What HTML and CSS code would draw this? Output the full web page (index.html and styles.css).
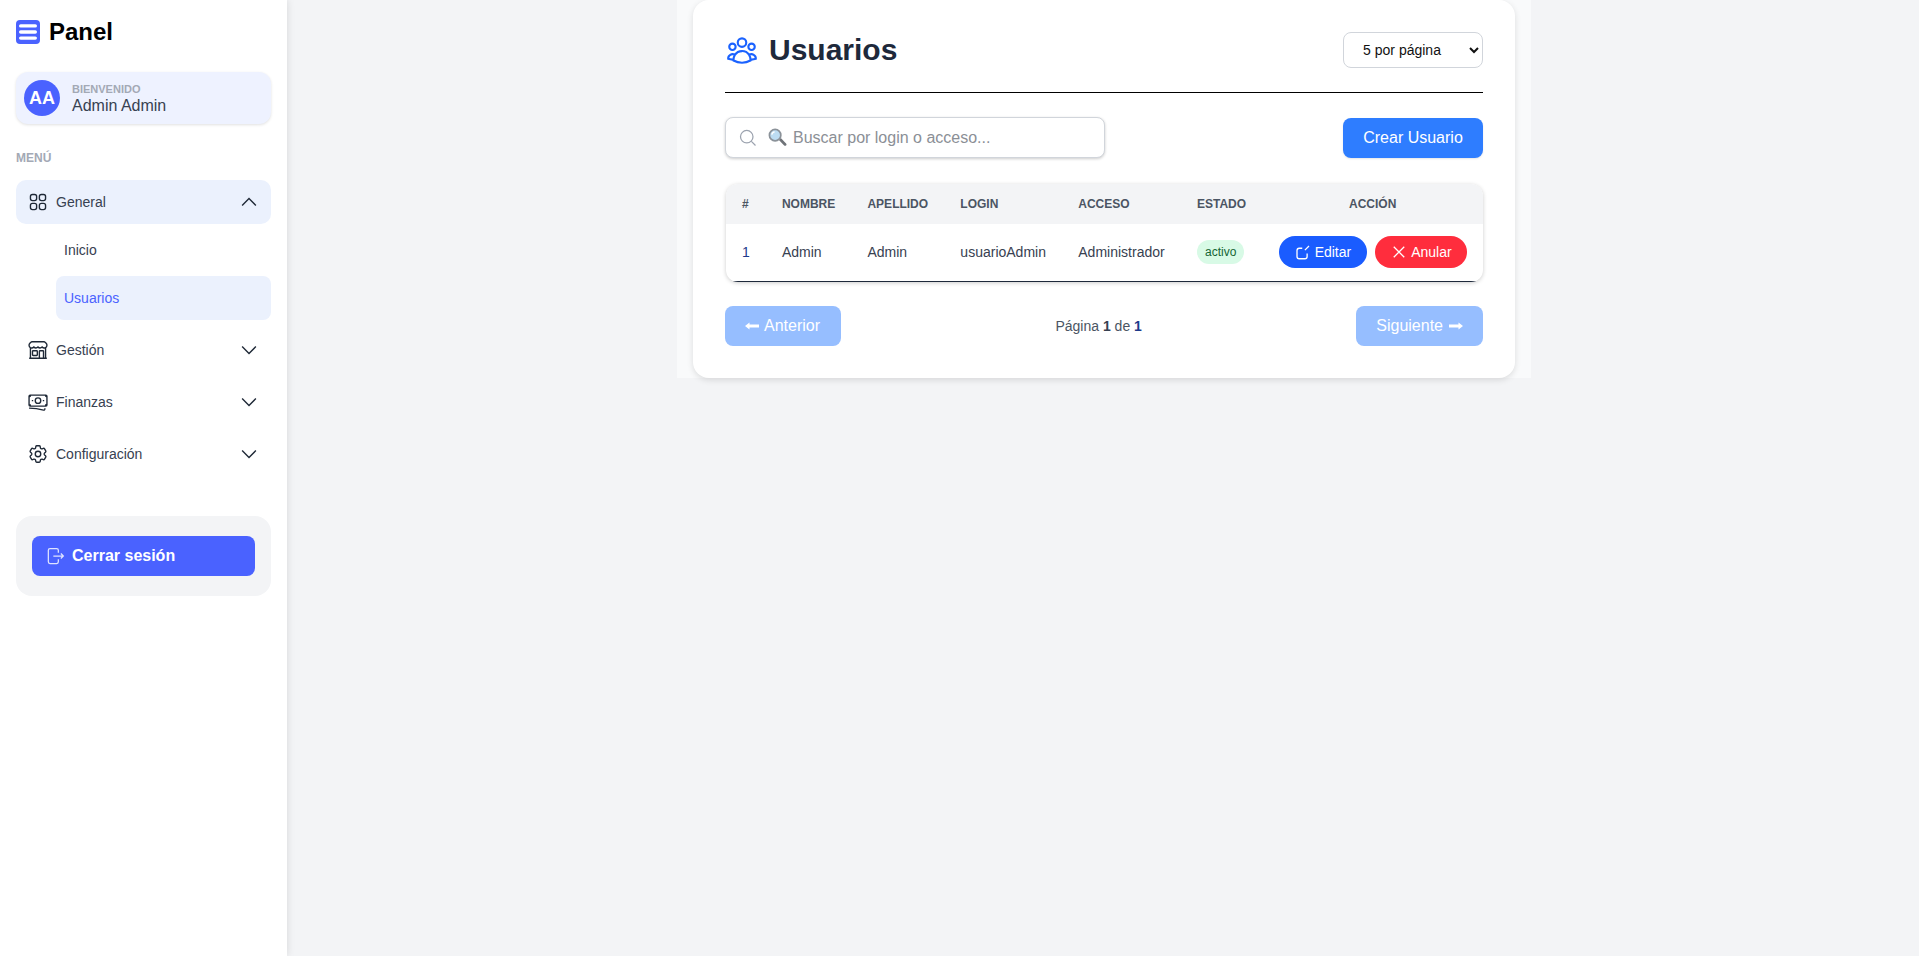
FILE: index.html
```html
<!doctype html>
<html lang="es">
<head>
<meta charset="utf-8">
<title>Panel - Usuarios</title>
<link rel="stylesheet" href="styles.css">
</head>
<body>

<div class="layout">

<aside class="sidebar">
  <div class="brand">
    <svg class="brand-icon" viewBox="0 0 24 24"><rect width="24" height="24" rx="4" fill="#4a62ff"/><rect x="3" y="4.200" width="18" height="3.400" rx="1.700" fill="#fff"/><rect x="3" y="10.300" width="18" height="3.400" rx="1.700" fill="#fff"/><rect x="3" y="16.400" width="18" height="3.400" rx="1.700" fill="#fff"/></svg>
    <span>Panel</span>
  </div>

  <div class="welcome">
    <div class="avatar">AA</div>
    <div class="welcome-text">
      <small>BIENVENIDO</small>
      <span>Admin Admin</span>
    </div>
  </div>

  <div class="menu-label">MENÚ</div>

  <nav class="menu">
    <div class="menu-item open">
      <svg class="ico" viewBox="0 0 24 24"><path d="M3.75 6A2.25 2.25 0 0 1 6 3.75h2.25A2.25 2.25 0 0 1 10.5 6v2.25a2.25 2.25 0 0 1-2.25 2.25H6a2.25 2.25 0 0 1-2.25-2.25V6ZM3.75 15.75A2.25 2.25 0 0 1 6 13.5h2.25a2.25 2.25 0 0 1 2.25 2.25V18a2.25 2.25 0 0 1-2.25 2.25H6A2.25 2.25 0 0 1 3.75 18v-2.25ZM13.5 6a2.25 2.25 0 0 1 2.25-2.25H18A2.25 2.25 0 0 1 20.25 6v2.25A2.25 2.25 0 0 1 18 10.5h-2.25a2.25 2.25 0 0 1-2.25-2.25V6ZM13.5 15.75a2.25 2.25 0 0 1 2.25-2.25H18a2.25 2.25 0 0 1 2.25 2.25V18A2.25 2.25 0 0 1 18 20.25h-2.25A2.25 2.25 0 0 1 13.5 18v-2.25Z"/></svg>
      <span class="menu-name">General</span>
      <svg class="ico" viewBox="0 0 24 24"><path d="m4.5 15.75 7.5-7.5 7.5 7.5"/></svg>
    </div>
    <div class="submenu">
      <div class="sub-item">Inicio</div>
      <div class="sub-item active">Usuarios</div>
    </div>
    <div class="menu-item">
      <svg class="ico" viewBox="0 0 24 24"><path d="M13.5 21v-7.5a.75.75 0 0 1 .75-.75h3a.75.75 0 0 1 .75.75V21m-4.5 0H2.36m11.14 0H18m0 0h3.64m-1.39 0V9.349M3.75 21V9.349m0 0a3.001 3.001 0 0 0 3.75-.615A2.993 2.993 0 0 0 9.75 9.75c.896 0 1.7-.393 2.25-1.016a2.993 2.993 0 0 0 2.25 1.016c.896 0 1.7-.393 2.25-1.016a3.001 3.001 0 0 0 3.75.614m-16.5 0a3.004 3.004 0 0 1-.621-4.72l1.189-1.19A1.5 1.5 0 0 1 5.378 3h13.243a1.5 1.5 0 0 1 1.06.44l1.19 1.189a3 3 0 0 1-.621 4.72M6.75 18h3.75a.75.75 0 0 0 .75-.75V13.5a.75.75 0 0 0-.75-.75H6.75a.75.75 0 0 0-.75.75v3.75c0 .414.336.75.75.75Z"/></svg>
      <span class="menu-name">Gestión</span>
      <svg class="ico" viewBox="0 0 24 24"><path d="m19.5 8.25-7.5 7.5-7.5-7.5"/></svg>
    </div>
    <div class="menu-item">
      <svg class="ico" viewBox="0 0 24 24"><path d="M2.25 18.75a60.07 60.07 0 0 1 15.797 2.101c.727.198 1.453-.342 1.453-1.096V18.75M3.75 4.5v.75A.75.75 0 0 1 3 6h-.75m0 0v-.375c0-.621.504-1.125 1.125-1.125H20.25M2.25 6v9m18-10.5v.75c0 .414.336.75.75.75h.75m-1.5-1.5h.375c.621 0 1.125.504 1.125 1.125v9.75c0 .621-.504 1.125-1.125 1.125h-.375m1.5-1.5H21a.75.75 0 0 0-.75.75v.75m0 0H3.75m0 0h-.375a1.125 1.125 0 0 1-1.125-1.125V15m1.5 1.5v-.75A.75.75 0 0 0 3 15h-.75M15 10.5a3 3 0 1 1-6 0 3 3 0 0 1 6 0Zm3 0h.008v.008H18V10.5Zm-12 0h.008v.008H6V10.5Z"/></svg>
      <span class="menu-name">Finanzas</span>
      <svg class="ico" viewBox="0 0 24 24"><path d="m19.5 8.25-7.5 7.5-7.5-7.5"/></svg>
    </div>
    <div class="menu-item">
      <svg class="ico" viewBox="0 0 24 24"><path d="M9.594 3.94c.09-.542.56-.94 1.11-.94h2.593c.55 0 1.02.398 1.11.94l.213 1.281c.063.374.313.686.645.87.074.04.147.083.22.127.325.196.72.257 1.075.124l1.217-.456a1.125 1.125 0 0 1 1.37.49l1.296 2.247a1.125 1.125 0 0 1-.26 1.431l-1.003.827c-.293.241-.438.613-.43.992a7.723 7.723 0 0 1 0 .255c-.008.378.137.75.43.991l1.004.827c.424.35.534.955.26 1.43l-1.298 2.247a1.125 1.125 0 0 1-1.369.491l-1.217-.456c-.355-.133-.75-.072-1.076.124a6.47 6.47 0 0 1-.22.128c-.331.183-.581.495-.644.869l-.213 1.281c-.09.543-.56.94-1.11.94h-2.594c-.55 0-1.019-.398-1.11-.94l-.213-1.281c-.062-.374-.312-.686-.644-.87a6.52 6.52 0 0 1-.22-.127c-.325-.196-.72-.257-1.076-.124l-1.217.456a1.125 1.125 0 0 1-1.369-.49l-1.297-2.247a1.125 1.125 0 0 1 .26-1.431l1.004-.827c.292-.24.437-.613.43-.991a6.932 6.932 0 0 1 0-.255c.007-.38-.138-.751-.43-.992l-1.004-.827a1.125 1.125 0 0 1-.26-1.43l1.297-2.247a1.125 1.125 0 0 1 1.37-.491l1.216.456c.356.133.751.072 1.076-.124.072-.044.146-.086.22-.128.332-.183.582-.495.644-.869l.214-1.28ZM15 12a3 3 0 1 1-6 0 3 3 0 0 1 6 0Z"/></svg>
      <span class="menu-name">Configuración</span>
      <svg class="ico" viewBox="0 0 24 24"><path d="m19.5 8.25-7.5 7.5-7.5-7.5"/></svg>
    </div>
  </nav>

  <div class="logout-box">
    <button class="logout">
      <svg class="logout-ico" viewBox="0 0 24 24"><path d="M16 8V5a2 2 0 0 0-2-2H6a2 2 0 0 0-2 2v14a2 2 0 0 0 2 2h8a2 2 0 0 0 2-2v-3M10 12h12m-3-3 3 3-3 3"/></svg>
      Cerrar sesión
    </button>
  </div>
</aside>

<main class="main">
  <div class="wrap">
    <section class="card">

      <div class="card-head">
        <h1>
          <svg class="title-ico" viewBox="0 0 24 24"><path d="M18 18.72a9.094 9.094 0 0 0 3.741-.479 3 3 0 0 0-4.682-2.72m.94 3.198.001.031c0 .225-.012.447-.037.666A11.944 11.944 0 0 1 12 21c-2.17 0-4.207-.576-5.963-1.584A6.062 6.062 0 0 1 6 18.719m12 0a5.971 5.971 0 0 0-.941-3.197m0 0A5.995 5.995 0 0 0 12 12.75a5.995 5.995 0 0 0-5.058 2.772m0 0a3 3 0 0 0-4.681 2.72 8.986 8.986 0 0 0 3.74.477m.94-3.197a5.971 5.971 0 0 0-.94 3.197M15 6.75a3 3 0 1 1-6 0 3 3 0 0 1 6 0Zm6 3a2.25 2.25 0 1 1-4.5 0 2.25 2.25 0 0 1 4.5 0Zm-13.5 0a2.25 2.25 0 1 1-4.5 0 2.25 2.25 0 0 1 4.5 0Z"/></svg>
          Usuarios
        </h1>
        <select class="per-page">
          <option>5 por página</option>
          <option>10 por página</option>
          <option>20 por página</option>
        </select>
      </div>

      <div class="toolbar">
        <div class="search">
          <svg class="search-ico" viewBox="0 0 24 24"><path d="m21 21-5.197-5.197m0 0A7.5 7.500 0 1 0 5.196 5.196a7.500 7.500 0 0 0 10.607 10.607Z"/></svg>
          <svg class="search-emoji" viewBox="0 0 20 20"><path d="M11.500 12.500l2-2 5.500 5.800a1.400 1.400 0 0 1-2 2z" fill="#6f7378"/><circle cx="7.500" cy="7.500" r="6" fill="#bcdcf2" stroke="#8b9299" stroke-width="1.800"/><path d="M4 7a3.500 3.500 0 0 1 3-3" fill="none" stroke="#fff" stroke-width="1.400"/></svg>
          <input type="text" placeholder="Buscar por login o acceso...">
        </div>
        <button class="btn-create">Crear Usuario</button>
      </div>

      <div class="table-box">
        <table>
          <thead>
            <tr>
              <th>#</th>
              <th>Nombre</th>
              <th>Apellido</th>
              <th>Login</th>
              <th>Acceso</th>
              <th>Estado</th>
              <th class="center">Acción</th>
            </tr>
          </thead>
          <tbody>
            <tr>
              <td class="num">1</td>
              <td>Admin</td>
              <td>Admin</td>
              <td>usuarioAdmin</td>
              <td>Administrador</td>
              <td><span class="badge">activo</span></td>
              <td class="center">
                <div class="actions">
                  <button class="pill edit">
                    <svg class="pill-ico" viewBox="0 0 24 24"><path d="M11 7H7a3 3 0 0 0-3 3v8a3 3 0 0 0 3 3h7.500a3 3 0 0 0 3-3v-4M14.500 9.500 20 4"/></svg>
                    Editar
                  </button>
                  <button class="pill cancel">
                    <svg class="pill-ico" viewBox="0 0 24 24"><path d="M5 19 19 5M5 5l14 14"/></svg>
                    Anular
                  </button>
                </div>
              </td>
            </tr>
          </tbody>
        </table>
      </div>

      <div class="pager">
        <button class="page-btn prev">
          <svg class="arrow" viewBox="0 0 14 8"><path d="M0 4l4.500-3.500v2h9.500v3H4.500v2z"/></svg>
          Anterior
        </button>
        <span class="page-info">Página <b>1</b> de <b class="last">1</b></span>
        <button class="page-btn next">
          Siguiente
          <svg class="arrow" viewBox="0 0 14 8"><path d="M14 4L9.500.5v2H0v3h9.500v2z"/></svg>
        </button>
      </div>

    </section>
  </div>
</main>

</div>

</body>
</html>
```

FILE: styles.css
```css
* {box-sizing: border-box;}
html, body {height: 100%;}
body {margin: 0; background: #f3f4f6; color: #1f2937; font: 14px "Liberation Sans", Arial, sans-serif;}
button, input, select {font-family: inherit;}
.layout {display: flex; min-height: 100%;}

/* sidebar */
.sidebar {width: 287px; flex: none; padding: 20px 16px; background: #fff; box-shadow: 0 0 8px rgba(0,0,0,.12);}
.brand {display: flex; align-items: center; gap: 9px; height: 24px; margin-bottom: 28px; color: #000; font-size: 24px; font-weight: bold;}
.brand-icon {width: 24px; height: 24px;}
.welcome {display: flex; align-items: center; gap: 12px; height: 52px; padding: 0 8px; border-radius: 12px; background: #eef2ff; box-shadow: 0 1px 3px rgba(0,0,0,.12);}
.avatar {width: 36px; height: 36px; border-radius: 50%; display: flex; align-items: center; justify-content: center; background: #4a62ff; color: #fff; font-size: 18px; font-weight: bold;}
.welcome-text {display: flex; flex-direction: column; font-size: 16px; line-height: 17px; color: #374151;}
.welcome-text small {font-size: 11px; font-weight: bold; line-height: 15px; color: #a3a9b5;}
.menu-label {margin: 27px 0 15px; font-size: 12px; font-weight: bold; line-height: 14px; color: #a3a9b5;}
.menu {display: flex; flex-direction: column; gap: 8px;}
.menu-item {display: flex; align-items: center; gap: 7px; height: 44px; padding: 0 11px; border-radius: 10px; color: #374151;}
.menu-item.open {background: #ebf1fd;}
.menu-name {flex: 1;}
.ico {width: 22px; height: 22px; fill: none; stroke: #1f2937; stroke-width: 1.5;}
.submenu {display: flex; flex-direction: column; gap: 4px; margin: -4px 0 0 40px;}
.sub-item {display: flex; align-items: center; height: 44px; padding: 0 8px; border-radius: 8px; color: #374151;}
.sub-item.active {background: #ebf1fd; color: #4a62ff;}
.logout-box {margin-top: 40px; padding: 20px 16px; border-radius: 16px; background: #f3f4f6;}
.logout {display: flex; align-items: center; gap: 7px; width: 100%; height: 40px; padding: 0 13px; border: 0; border-radius: 8px; background: #4a62ff; color: #fff; font-size: 16px; font-weight: bold;}
.logout-ico {width: 20px; height: 20px; fill: none; stroke: #dfe4ff; stroke-width: 1.5;}

/* main */
.main {flex: 1; display: flex; justify-content: center; align-items: flex-start; padding-left: 2px;}
.wrap {width: 854px; padding: 0 16px; background: #f9fafb;}
.card {height: 378px; padding: 32px; border-radius: 16px; background: #fff; box-shadow: 0 2px 6px rgba(0,0,0,.12);}
.card-head {display: flex; justify-content: space-between; align-items: center; height: 61px; padding-bottom: 25px; border-bottom: 1px solid #000;}
h1 {display: flex; align-items: center; gap: 10px; margin: 0; color: #1e293b; font-size: 30px;}
.title-ico {width: 34px; height: 34px; fill: none; stroke: #1a62ff; stroke-width: 1.5;}
.per-page {width: 140px; height: 36px; padding: 0 18px 0 8px; border: 1px solid #d1d5db; border-radius: 8px; background: #fff; color: #111; font-size: 14px; text-align: center;}

.toolbar {display: flex; justify-content: space-between; align-items: flex-end; height: 41px; margin: 24px 0 26px;}
.search {display: flex; align-items: center; width: 380px; height: 41px; padding-left: 12px; border: 1px solid #d1d5db; border-radius: 8px; background: #fff; box-shadow: 0 1px 3px rgba(0,0,0,.2);}
.search-ico {width: 20px; height: 20px; fill: none; stroke: #9ca3af; stroke-width: 1.5;}
.search-emoji {width: 19px; height: 19px; margin-left: 10px;}
.search input {flex: 1; min-width: 0; margin-left: 4px; border: 0; outline: 0; background: none; font-size: 16px;}
.search input::placeholder {color: #8b8f96;}
.btn-create {width: 140px; height: 40px; border: 0; border-radius: 8px; background: #2e7dff; color: #fff; font-size: 16px; box-shadow: 0 1px 2px rgba(0,0,0,.1);}

/* table */
.table-box {margin-left: 1px; border-radius: 12px; overflow: hidden; background: #fff; box-shadow: 0 1px 4px rgba(0,0,0,.2);}
table {width: 100%; border-collapse: collapse;}
th {height: 40px; padding: 0 16px; background: #f3f4f6; color: #4b5563; font-size: 12px; text-align: left; text-transform: uppercase;}
td {height: 57px; padding: 0 16px; border-bottom: 1px solid #1e293b; color: #374151; white-space: nowrap;}
td.num {color: #1e3a8a;}
.center {text-align: center;}
.badge {display: inline-block; height: 24px; padding: 0 8px; border-radius: 12px; background: #d8fae6; color: #166534; font-size: 12px; line-height: 24px;}
.actions {display: flex; justify-content: center; gap: 8px;}
.pill {display: flex; align-items: center; gap: 3px; height: 32px; padding: 0 16px 0 15px; border: 0; border-radius: 16px; color: #fff; font-size: 14px;}
.pill.edit {background: #1a5cff;}
.pill.cancel {background: #ff2d3d; padding-right: 15px;}
.pill-ico {width: 18px; height: 18px; fill: none; stroke: #fff; stroke-width: 1.75;}

/* pager */
.pager {display: flex; justify-content: space-between; align-items: center; height: 40px; margin-top: 24px;}
.page-btn {display: flex; align-items: center; gap: 5px; height: 40px; padding: 0 20px; border: 0; border-radius: 8px; background: #96beff; color: #fff; font-size: 16px;}
.page-btn.prev {padding-right: 21px;}
.page-btn.next {gap: 6px;}
.arrow {width: 14px; height: 8px; fill: #fff;}
.page-info {color: #4b5563;}
.page-info b {color: #374151;}
.page-info .last {color: #1e3a8a;}
```
